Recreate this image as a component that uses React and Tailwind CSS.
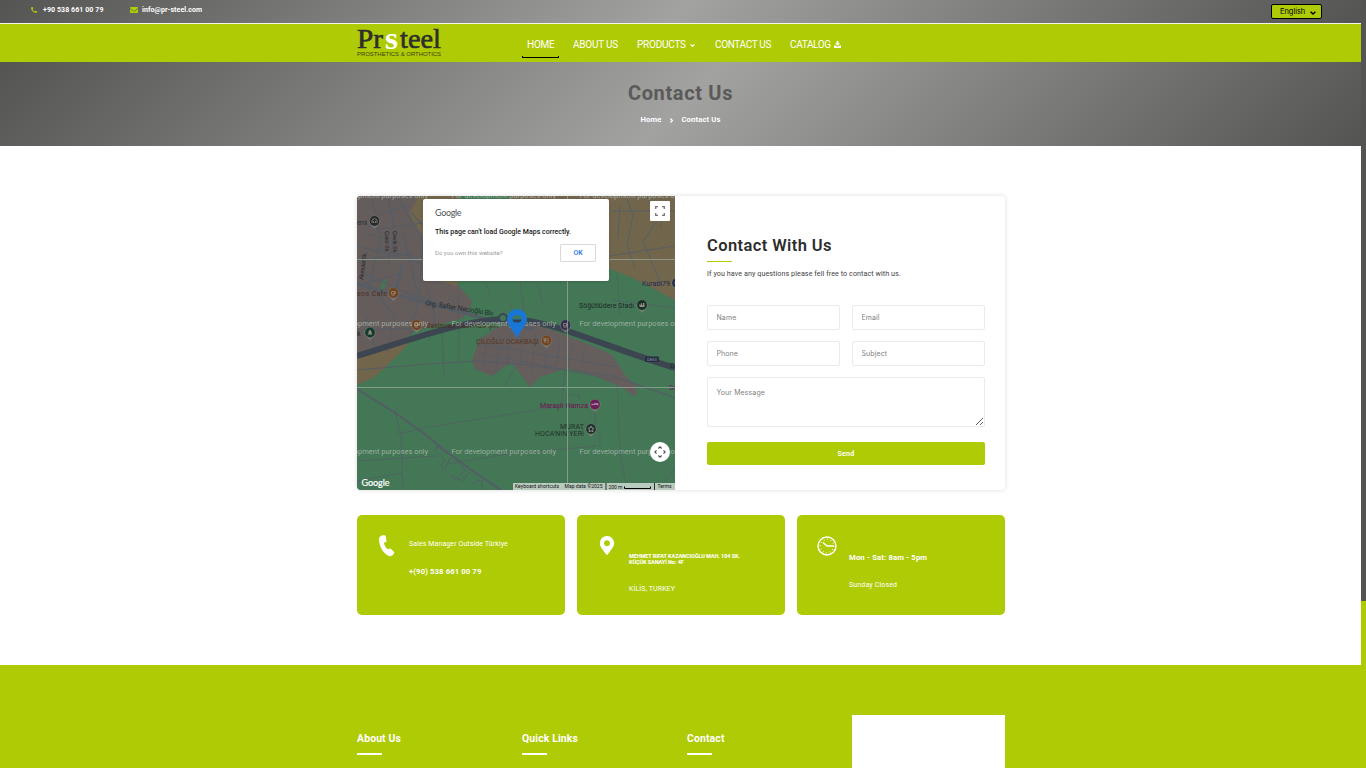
import { FaPhoneAlt, FaEnvelope, FaMapMarkerAlt } from "react-icons/fa";

const GRADIENT = "bg-[linear-gradient(135deg,#545452_0%,#a2a2a0_50%,#545452_100%)]";

function Chevron({ className }) {
  return (
    <svg viewBox="0 0 6 6" className={className} fill="none" stroke="currentColor" strokeWidth="1.4">
      <path d="M0.600 1.700 3 4.100 5.400 1.700" />
    </svg>
  );
}

function TopBar() {
  return (
    <div className={`${GRADIENT} flex h-[23px] items-start text-[7px] font-bold text-white`}>
      <div className="flex h-[20px] w-[99px] items-center pl-[31px]">
        <FaPhoneAlt className="mb-px size-[6px] shrink-0 text-[#afcb05]" />
        <span className="ml-[6px] whitespace-nowrap tracking-[0.09px]">+90 538 661 00 79</span>
      </div>
      <div className="flex h-[20px] items-center pl-[31px]">
        <FaEnvelope className="size-[8px] shrink-0 text-[#afcb05]" />
        <span className="ml-[4px] whitespace-nowrap tracking-[0.08px]">info@pr-steel.com</span>
      </div>
      <button className="mt-[4px] mr-[39px] ml-auto flex h-[15px] w-[51px] items-center rounded-[2px] border border-black bg-[#afcb05] pl-[8px] font-['Inter',sans-serif] text-[7.5px] font-normal tracking-[-0.05px] text-black">
        English
        <Chevron className="mt-[2px] ml-[5px] size-[6px]" />
      </button>
    </div>
  );
}

function Logo() {
  return (
    <svg width="86" height="36" viewBox="0 0 86 36" className="block">
      <g fontFamily="'Liberation Serif',serif" fontSize="27.5" fill="#2e2e2c" stroke="#2e2e2c" strokeWidth="0.6">
        <text x="0" y="24" textLength="26" lengthAdjust="spacingAndGlyphs">Pr</text>
        <text x="43" y="24" textLength="41" lengthAdjust="spacingAndGlyphs">teel</text>
      </g>
      <text x="28" y="24.500" fontFamily="'Liberation Serif',serif" fontWeight="700" fontSize="31" fill="#fff" textLength="13" lengthAdjust="spacingAndGlyphs">s</text>
      <text x="0" y="32.200" fontFamily="'Liberation Sans',sans-serif" fontSize="5.800" fill="#3b400f" textLength="84" lengthAdjust="spacingAndGlyphs">PROSTHETICS &amp; ORTHOTICS</text>
    </svg>
  );
}

const navItem = "flex h-[40px] items-center";

function Nav() {
  return (
    <header className="flex h-[39px] border-t border-[#f4f5e8] bg-[#afcb05] pl-[357px]">
      <div className="w-[170px]"><Logo /></div>
      <nav className="flex h-[38px] text-[10px] tracking-[-0.22px] text-white">
        <a className={`${navItem} relative w-[46px]`}>
          HOME
          <span className="absolute bottom-[6px] -left-[5px] h-[2px] w-[37px] rounded-b-[1px] border-x border-b border-black" />
        </a>
        <a className={`${navItem} w-[64px]`}>ABOUT US</a>
        <a className={`${navItem} w-[78px]`}>PRODUCTS<Chevron className="mt-[2px] ml-[4px] size-[5px]" /></a>
        <a className={`${navItem} w-[75px] tracking-[-0.35px]`}>CONTACT US</a>
        <a className={`${navItem} tracking-[-0.35px]`}>
          CATALOG
          <svg viewBox="0 0 8 8" className="ml-[3px] size-[7px]" fill="currentColor">
            <path d="M3 0H5V2.500H7L4 5.500 1 2.500H3ZM0 5H2L4 6.500 6 5H8V8H0Z" />
          </svg>
        </a>
      </nav>
    </header>
  );
}

function Hero() {
  return (
    <section className={`${GRADIENT} flex h-[84px] flex-col items-center pt-[19px]`}>
      <h1 className="text-[20px] leading-[24px] font-bold tracking-[0.65px] text-[#5a5a59]">Contact Us</h1>
      <div className="mt-[9px] flex items-center text-[7.7px] leading-[12px] font-bold tracking-[0.12px] text-white">
        <span>Home</span>
        <Chevron className="mr-[7px] ml-[8px] size-[5px] -rotate-90" />
        <span>Contact Us</span>
      </div>
    </section>
  );
}

function Poi({ x, y, c, children }) {
  return (
    <g transform={`translate(${x} ${y})`}>
      <path d="M0 8 L-4.5 3.5 A5.5 5.5 0 1 1 4.5 3.5 Z" fill="#88877f" opacity=".6" />
      <circle r="4.9" fill={c} />
      {children || <path d="M-2 -1.5h3v2.5h-3z M1 -1h1.2v1.3H1 M-2 2h3.5" fill="none" stroke="#8f8b80" strokeWidth=".8" />}
    </g>
  );
}

function MapArt() {
  const dev = "For development purposes only";
  return (
    <svg width="318" height="294" viewBox="0 0 318 294" className="block rounded-l-[3px]" fontFamily="Roboto, sans-serif">
      <rect width="318" height="294" fill="#437756" />
      <path d="M0 0H66L58 20 66 40 82 84 100 88 115 105 113 112 106 122 78 130 58 135 40 148 0 158Z" fill="#665d5d" />
      <path d="M62 0H102L104 20 100 91 82 84 66 40 52 18Z" fill="#72664c" />
      <path d="M152 0H318V104L276 82 251 72 200 40 160 20Z" fill="#72664c" />
      <path d="M22 152 53 145 44 156 18 181 0 189V160Z" fill="#72664c" />
      <path d="M26 85 30 83 27 95 23 92Z" fill="#437756" />
      <path d="M139 132 122 144 115 165 118 173 135 180 147 171 155 167 173 191 183 181 210 172 236 179 266 192 277 200 280 198 279 189 270 182 255 159 238 151 200 136 165 124Z" fill="#665d5d" />
      <g fill="none" stroke="#555d66" strokeWidth="1.2">
        <path d="M40 0 66 45 62 100 52 145M0 24 20 33 66 27M0 50 66 68M14 0 24 42 11 94M31 0 38 36 31 70M5 76 66 105M0 134 66 132M18 95 38 121 30 156M46 38 60 94M0 65 55 57M0 90 44 77M54 17 66 29M9 120 19 156" />
        <path d="M52 9 18 20M60 62 19 53M8 37 45 48M48 95 86 109M71 92 78 122 72 145" strokeWidth=".9" />
        <path d="M0 88 66 106M45 70 38 100" strokeWidth="3" opacity=".8" />
        <path d="M123 148 260 171M122 157 258 184M130 142 126 174M143 139 139 177M154 135 151 169M166 137 163 172M178 139 175 176M190 141 187 175M203 143 199 172M215 147 211 172M228 150 224 172" strokeWidth=".8" />
        <path d="M0 174 71 168 122 165 162 168 203 173 256 180 318 202" strokeWidth="1.2" />
        <path d="M0 193 37 216 65 236 86 253 113 273 144 294" strokeWidth="2" />
        <path d="M85 136 87 181M101 90 102 166M128 85 134 102M152 105 155 112M163 84 168 125M40 238 72 231 148 219 204 210 208 173M38 216 44 240 46 294M42 210 37 218M204 210 212 199H222V204M260 183 263 258 270 294M238 215V232L243 240V250M0 265 80 260M0 285 45 277M90 268 150 258 240 250M304 290 318 273M155 166 158 172 150 185 148 190" strokeWidth=".9" opacity=".8" />
        <path d="M79 250 95 260 108 274 98 284 84 270 88 264 78 254 81 250M94 261 88 272M113 276 105 285 96 280M116 287 124 284 126 294" strokeWidth=".9" />
        <path d="M269 0 276 20 270 48 278 72M290 0 300 25 286 46 305 90M255 15H318M252 60 318 50M263 10 261 42M304 0V32" strokeWidth=".9" />
        <path d="M180 86 186 108M260 77 263 120M255 104 318 112" strokeWidth=".7" />
      </g>
      <path d="M66 106 137 125 177 133" fill="none" stroke="#555d66" strokeWidth="3" />
      <path d="M0 160C55 143 110 123 151 123S240 148 318 172" fill="none" stroke="#3c4651" strokeWidth="6" />
      <circle cx="146" cy="122" r="4" fill="#437756" stroke="#3c4651" strokeWidth="2" />
      <g fill="#20282b" fontSize="7" opacity=".9">
        <text transform="translate(68 109) rotate(9)" textLength="69">Org. Safter Necioğlu Blv</text>
        <text transform="translate(28 35) rotate(90)" fontSize="6" textLength="22">Çakıl Sk.</text>
        <text transform="translate(36 35) rotate(90)" fontSize="6" textLength="23">Çevik Sk.</text>
        <text transform="translate(6 84) rotate(-82)" fontSize="6" textLength="28">Akınolar Sk.</text>
      </g>
      <g fill="#1e2430" fontSize="7">
        <text x="0" y="28.5" fill="#343331" textLength="10">emi</text>
        <text x="0" y="100" fill="#4b3023" textLength="30">eos Cafe</text>
        <text x="69" y="132" fill="#4b3023" textLength="72">Baklavacı Hacı Hüseyin</text>
        <text x="119" y="148" fill="#553820" textLength="63">ÇİLOĞLU OCAKBAŞI</text>
        <text x="222" y="112" fill="#202b29" textLength="55">Söğütlüdere Stadı</text>
        <text x="285" y="90" fill="#1f2b52" textLength="28">Kurabi79</text>
        <text x="183" y="212" fill="#6b2456" stroke="#6b2456" strokeWidth=".15" textLength="48">Maraşlı Hamza</text>
        <text x="203" y="233" fill="#262f2b" textLength="24">MURAT</text>
        <text x="178" y="240" fill="#262f2b" textLength="49">HOCA&apos;NIN YERİ</text>
        <text x="312" y="194" fill="#6b2456">Sa</text>
        <text x="313" y="172" fill="#202b29">D</text>
        <text x="0" y="140" fill="#202b29">k</text>
      </g>
      <Poi x={17.5} y={25} c="#292d2e"><path d="M-2.5 2V-1L0-2.5 2.5-1V2M-1 2V0M1 2V0" fill="none" stroke="#8f8b80" strokeWidth=".8" /></Poi>
      <Poi x={36.5} y={97} c="#74431f" />
      <Poi x={59.5} y={129} c="#74431f" />
      <Poi x={13} y={136.5} c="#153c2c"><path d="M0-3L2 0H1L2.5 2H-2.5L-1 0H-2Z M0 2V3" fill="#8f8b80" /></Poi>
      <Poi x={208.5} y={129} c="#353052" />
      <Poi x={189.5} y={144.5} c="#74431f"><path d="M-1.5-2.5V2.5M-2.5-2.5V0H-.5V-2.5M1.5-2.5V2.5" fill="none" stroke="#8f8b80" strokeWidth=".8" /></Poi>
      <Poi x={285} y={109} c="#18302a"><path d="M-2.5-1L-1 0V-2H0V0H1V-2H2.5V2H-2.5Z" fill="#8f8b80" /></Poi>
      <Poi x={320} y={87} c="#1f2b52" />
      <Poi x={238} y={208.5} c="#6b1f58"><path d="M-3-1V1M-3 0H3V1M-1-1H3V0" fill="none" stroke="#b090a7" strokeWidth=".8" /></Poi>
      <Poi x={234} y={233} c="#20302c"><path d="M0-3L1-1 3-.8 1.5.7 2 2.8 0 1.8-2 2.8-1.5.7-3-.8-1-1Z" fill="none" stroke="#939a91" strokeWidth=".9" /></Poi>
      <rect x="288" y="160.500" width="14" height="5.500" rx="1" fill="#252d43" />
      <text x="290" y="165" fontSize="4" fill="#9299a2" textLength="10">D850</text>
      <g fill="#b5beb4" fillOpacity=".8" fontSize="7.3">
        {[2, 130, 258].map((y) => (
          <g key={y}>
            <text x="-33.5" y={y} textLength="104.500" lengthAdjust="spacingAndGlyphs">{dev}</text>
            <text x="94.500" y={y} textLength="104.500" lengthAdjust="spacingAndGlyphs">{dev}</text>
            <text x="222.500" y={y} textLength="104.500" lengthAdjust="spacingAndGlyphs">{dev}</text>
          </g>
        ))}
      </g>
      <path d="M0 63.500H318M0 191.500H318M210.500 0V294" stroke="#9ba79a" strokeWidth="1" opacity=".75" />
      <path d="M160 143C157 134 150 130 150 123A10 10 0 0 1 170 123C170 130 163 134 160 143Z" fill="#1976d2" />
      <path d="M155.500 123a4.500 3.500 0 0 1 9 0Z" fill="#437756" />
      <path d="M155.500 123.500a4.500 3 0 0 0 9 0Z" fill="#2c4257" />
      <text x="4.500" y="290" fontFamily="Lato, sans-serif" fontSize="9" fill="#fff" stroke="#fff" strokeWidth=".2" textLength="28">Google</text>
      <g fontSize="5" fill="#111">
        <rect x="156" y="287" width="162" height="7" fill="#b9cbbf" />
        <path d="M249 287v7M297.500 287v7" stroke="#26332c" strokeWidth="1" />
        <text x="158" y="292.300" textLength="44">Keyboard shortcuts</text>
        <text x="207.500" y="292.300" textLength="38">Map data ©2025</text>
        <text x="251.500" y="292.800" textLength="14">200 m</text>
        <path d="M267.500 290.500v2h26v-2" fill="none" stroke="#000" strokeWidth="1" />
        <text x="300.500" y="292.300" textLength="14">Terms</text>
      </g>
    </svg>
  );
}

function MapPanel() {
  return (
    <div className="relative h-[294px] w-[318px] shrink-0 overflow-hidden rounded-l-[3px]">
      <MapArt />
      <div className="absolute top-[3px] left-[66px] h-[82px] w-[186px] rounded-[2px] bg-white pt-[8px] pr-[13px] pl-[12px] font-['Roboto',sans-serif] shadow-sm">
        <div className="font-['Lato',sans-serif] text-[9px] leading-[12px] tracking-[-0.35px] text-[#505357]">Google</div>
        <p className="mt-[7px] text-[7px] leading-[12px] font-medium whitespace-nowrap text-[#171717]">This page can&apos;t load Google Maps correctly.</p>
        <div className="mt-[6px] flex items-center justify-between">
          <span className="-mt-[2px] text-[6px] text-[#9b9b9b]">Do you own this website?</span>
          <button className="h-[18px] w-[36px] rounded-[1px] border border-[#d7d9dc] text-[7px] font-medium text-[#1a73e8]">OK</button>
        </div>
      </div>
      <div className="absolute top-[5px] left-[293px] flex size-[20px] items-center justify-center rounded-[1px] bg-white">
        <svg width="10" height="10" viewBox="0 0 10 10" fill="none" stroke="#777" strokeWidth="1.3"><path d="M.7 3V.7H3M7 .7h2.300V3M9.300 7v2.300H7M3 9.300H.7V7" /></svg>
      </div>
      <div className="absolute top-[246px] left-[293px] flex size-[20px] items-center justify-center rounded-full bg-white">
        <svg width="12" height="12" viewBox="0 0 12 12" fill="none" stroke="#555" strokeWidth="1.2"><path d="M4.300 2.500 6 .9 7.700 2.500M4.300 9.500 6 11.100 7.700 9.500M2.500 4.300 .9 6 2.500 7.700M9.500 4.300 11.100 6 9.500 7.700" /></svg>
      </div>
    </div>
  );
}

const field = "block w-full rounded-[2px] border border-[#ebebeb] bg-white px-[8.5px] font-['Inter',sans-serif] text-[7px] tracking-[0.1px] outline-none placeholder:text-[#808080]";

function ContactForm() {
  return (
    <form className="w-[330px] pt-[40px] pr-[20px] pl-[32px]">
      <h2 className="text-[16.5px] leading-[20px] font-semibold tracking-[0.4px] text-[#2d2d2d]">Contact With Us</h2>
      <div className="mt-[5px] h-px w-[25px] bg-[#afcb05]" />
      <p className="mt-[6px] text-[7.2px] leading-[12px] tracking-[0.06px] whitespace-nowrap text-[#444]">If you have any questions please fell free to contact with us.</p>
      <div className="mt-[25px] grid grid-cols-2 gap-x-[12px] gap-y-[11px]">
        <input className={`${field} h-[25px]`} placeholder="Name" />
        <input className={`${field} h-[25px]`} placeholder="Email" />
        <input className={`${field} h-[25px]`} placeholder="Phone" />
        <input className={`${field} h-[25px]`} placeholder="Subject" />
      </div>
      <textarea className={`${field} mt-[11px] h-[50px] resize pt-[9px] leading-[11px]`} placeholder="Your Message" />
      <button className="mt-[15px] block h-[23px] w-full rounded-[2px] bg-[#afcb05] pt-px text-[7px] font-bold tracking-[0.2px] text-white">Send</button>
    </form>
  );
}

function ClockIcon() {
  return (
    <svg width="20" height="20" viewBox="0 0 20 20" fill="none" stroke="#fff" className="block">
      <circle cx="10" cy="10" r="9" strokeWidth="1.400" />
      <circle cx="10" cy="10" r="6.800" strokeWidth="1.300" strokeDasharray="0.700 2.860" />
      <path d="M6 6.500 10 10H17" strokeWidth="1.300" />
    </svg>
  );
}

const card = "flex h-[100px] w-[208px] rounded-[5px] bg-[#afcb05] text-white";

function Cards() {
  return (
    <div className="mt-[25px] flex gap-[12px]">
      <div className={card}>
        <div className="w-[52px] pt-[20px] pl-[22px]">
          <svg width="16" height="22" viewBox="0 0 16 22" fill="#fff"><path d="M1 1.700C3 0 5.500-.2 6.800.7L7.500 6.300C7 7.500 5.600 7.300 5 7.800 5 10 7.200 13.500 9.200 14.300 10 14.200 10.500 13.200 11.500 13.500L15.300 17.300C15 19.500 13 21.500 10.800 21.200 4.500 19 .3 12 0 5 0 3.500 0 2.500 1 1.700Z" /></svg>
        </div>
        <div className="pt-[23px] text-[7px] leading-[12px]">
          <p className="tracking-[0.1px] whitespace-nowrap">Sales Manager Outside Türkiye</p>
          <p className="mt-[16px] text-[7.7px] font-bold tracking-[0.12px] whitespace-nowrap">+(90) 538 661 00 79</p>
        </div>
      </div>
      <div className={card}>
        <div className="w-[52px] pt-[21px] pl-[20px]"><FaMapMarkerAlt className="h-[19px] w-[20px]" /></div>
        <div className="pt-[38px] text-[7px] leading-[12px]">
          <p className="text-[5.5px] leading-[6px] font-extrabold tracking-[-0.08px] whitespace-nowrap">MEHMET RIFAT KAZANCIOĞLU MAH. 104 SK.<br />KÜÇÜK SANAYİ No: 4F</p>
          <p className="mt-[18px] tracking-[0.1px]">KİLİS, TURKEY</p>
        </div>
      </div>
      <div className={card}>
        <div className="w-[52px] pt-[21px] pl-[20px]"><ClockIcon /></div>
        <div className="pt-[37px] text-[7px] leading-[12px]">
          <p className="text-[7.7px] font-bold tracking-[0.15px] whitespace-nowrap">Mon - Sat: 8am - 5pm</p>
          <p className="mt-[15px] tracking-[0.15px]">Sunday Closed</p>
        </div>
      </div>
    </div>
  );
}

function Footer() {
  return (
    <footer className="flex h-[103px] bg-[#afcb05] pl-[357px] text-white">
      {["About Us", "Quick Links", "Contact"].map((t) => (
        <div key={t} className="w-[165px] pt-[66px]">
          <h3 className="text-[10.4px] leading-[16px] font-bold tracking-[0.15px]">{t}</h3>
          <div className="mt-[6px] h-[2px] w-[25px] bg-white" />
        </div>
      ))}
      <div className="mt-[50px] h-[53px] w-[153px] bg-white" />
    </footer>
  );
}

export default function App() {
  return (
    <div className="flex h-[768px] w-[1366px] overflow-hidden bg-white font-['Roboto',sans-serif]">
      <div className="w-[1361px]">
        <TopBar />
        <Nav />
        <Hero />
        <main className="h-[519px] pt-[50px] pl-[357px]">
          <div className="flex h-[294px] w-[648px] rounded-[3px] bg-white shadow-[0_0_5px_rgba(0,0,0,0.14)]">
            <MapPanel />
            <ContactForm />
          </div>
          <Cards />
        </main>
        <Footer />
      </div>
      <div className="w-[5px] bg-[#afcb05]">
        <div className="h-[601px] bg-[#545452]" />
      </div>
    </div>
  );
}
